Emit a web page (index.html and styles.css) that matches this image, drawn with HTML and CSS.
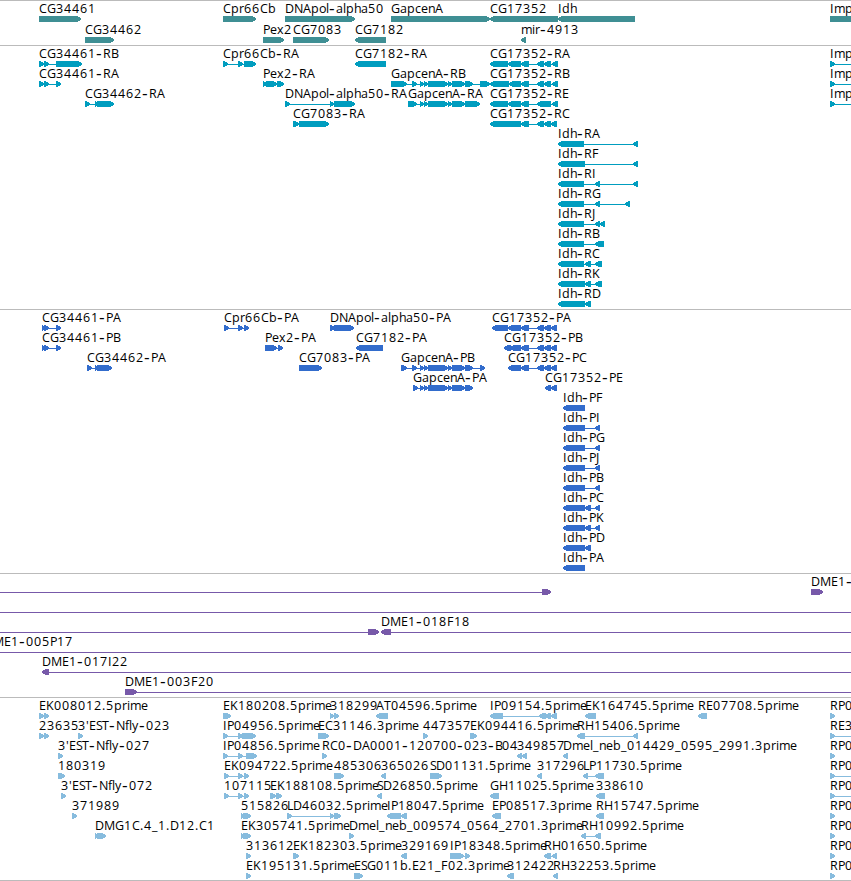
FILE: index.html
```
<!DOCTYPE html>
<html lang="en">
<head>
<meta charset="utf-8">
<title>Genome browser</title>
<link rel="stylesheet" href="styles.css">
</head>
<body>
<main class="browser">
  <section class="track genes" data-track="genes"></section>
  <section class="track transcripts" data-track="transcripts"></section>
  <section class="track proteins" data-track="proteins"></section>
  <section class="track clones" data-track="clones"></section>
  <section class="track ests" data-track="ests"></section>
</main>
<script src="tracks.js"></script>
</body>
</html>
```
FILE: styles.css
```
body {
  margin: 0;
  background: #fff;
  overflow: hidden;
}

.browser {
  display: flex;
  flex-direction: column;
  width: 851px;
  border-bottom: 1px solid #bbb;
}

.track {
  border-top: 1px solid #bbb;
}

.lane {
  display: block;
  width: 851px;
  overflow: visible;
}

.label {
  font-family: "Open Sans", "DejaVu Sans", sans-serif;
  font-size: 12.5px;
  fill: #000;
}

.hyphen {
  font-family: "Liberation Sans", sans-serif;
  font-size: 17px;
}

.glyph {
  shape-rendering: crispEdges;
}

.genes .glyph { fill: #3f8f94; }
.transcripts .glyph { fill: #009dbf; }
.proteins .glyph { fill: #326ccc; }
.clones .glyph { fill: #7759a9; }
.ests .glyph { fill: #87bcde; }
```
FILE: tracks.js
```
// Each feature is "row label strand segments"; "_" alone stands for no label,
// and a segment prefixed with "~" is a bare connector line.
const tracks = {
  genes: { height: 44, pitch: 21, features: `
0 CG34461 > 39-81
0 Cpr66Cb > 223-256
0 DNApol-alpha50 > 285-355
0 GapcenA > 391-490
0 CG17352 < 490-558
0 Idh < 558-635
0 Imp > 830-870
1 CG34462 > 85-114
1 Pex2 > 263-284
1 CG7083 > 293-329
1 CG7182 < 355-386
1 mir-4913 < 521-526` },
  transcripts: { height: 263, pitch: 20, features: `
0 CG34461-RB > 39-44,44-49,56-82
0 Cpr66Cb-RA > 223-228,238-243,244-256
0 CG7182-RA < 355-386
0 CG17352-RA < 490-508,508-521,521-529,537-544,544-551,552-558
0 Imp > 830-835,~835-851
1 CG34461-RA > 39-44,44-49,56-61
1 Pex2-RA > 263-267,266-277,277-284
1 GapcenA-RB > 391-407,412-417,420-424,424-428,428-448,448-452,452-465,465-473,480-490
1 CG17352-RB < 490-509,509-521,521-529,537-544,544-551,552-558
1 Imp > 830-835,~835-851
2 CG34462-RA > 85-90,95-99,97-114
2 DNApol-alpha50-RA > 285-290,330-334,334-355
2 GapcenA-RA > 408-417,420-424,424-428,428-448,448-452,452-465,465-480
2 CG17352-RE < 490-508,508-521,521-529,537-551,552-558
2 Imp > 830-835,~835-851
3 CG7083-RA > 293-299,299-329
3 CG17352-RC < 490-521,521-529,537-544,544-551,551-557
4 Idh-RA < 558-584,633-638
5 Idh-RF < 558-585,633-638
6 Idh-RI < 558-584,595-600,633-638
7 Idh-RG < 558-584,595-600,625-630
8 Idh-RJ < 558-584,595-600,600-605
9 Idh-RB < 558-584,595-604
10 Idh-RC < 558-584,585-591,595-602
11 Idh-RK < 558-585,585-591,595-602
12 Idh-RD < 558-585,585-591` },
  proteins: { height: 263, pitch: 20, features: `
0 CG34461-PA > 42-46,44-49,56-61
0 Cpr66Cb-PA > 224-229,238-243,244-249
0 DNApol-alpha50-PA > 330-335,334-354
0 CG17352-PA < 492-508,508-521,521-529,537-544,544-551,551-557
1 CG34461-PB > 42-46,44-49,56-61
1 Pex2-PA > 265-268,266-277,278-283
1 CG7182-PA < 356-383
1 CG17352-PB < 504-511,510-521,521-529,537-544,544-551,551-557
2 CG34462-PA > 87-92,95-99,97-112
2 CG7083-PA > 299-322
2 GapcenA-PB > 401-407,412-417,420-424,424-428,428-448,448-452,452-465,465-473,480-485
2 CG17352-PC < 508-521,521-529,537-544,544-551,551-557
3 GapcenA-PA > 413-418,420-424,424-428,428-448,448-452,452-465,465-473
3 CG17352-PE < 545-551,551-557
4 Idh-PF < 563-585
5 Idh-PI < 563-585,595-600
6 Idh-PG < 563-585,595-600
7 Idh-PJ < 563-585,595-600
8 Idh-PB < 563-585,595-600
9 Idh-PC < 563-585,585-591,595-600
10 Idh-PK < 563-585,585-591,595-600
11 Idh-PD < 563-585,585-591
12 Idh-PA < 563-585` },
  clones: { height: 123, pitch: 20, features: `
0 _ > ~0-542,542-551
0 DME1- > 811-823
1 _ > ~0-851
2 _ > ~0-368,368-379
2 DME1-018F18 < 381-391,~391-851
3 DME1-005P17 > ~-16-851
4 DME1-017I22 < 42-49,~49-851
5 DME1-003F20 > 125-137,~137-851` },
  ests: { height: 182, pitch: 20, features: `
0 EK008012.5prime > 39-44,44-49
0 EK180208.5prime > 223-231
0 318299 > 330-334,334-339
0 AT04596.5prime < 376-388
0 IP09154.5prime < 490-503,539-546,545-551,551-557
0 EK164745.5prime < 585-596
0 RE07708.5prime < 698-707
0 RP0 > 830-835
1 23635 > 39-44,44-49
1 3'EST-Nfly-023 > 78-83
1 IP04956.5prime > 223-228,238-243,242-256
1 EC31146.3prime > 318-329
1 447357 > 423-428
1 EK094416.5prime > 470-477
1 RH15406.5prime < 577-585,633-638
1 RE3 > 830-835,~835-851
2 3'EST-Nfly-027 > 58-63
2 IP04856.5prime > 223-228,238-243,246-257
2 RC0-DA0001-120700-023-B04 > 322-327
2 349857 < 517-522,522-527
2 Dmel_neb_014429_0595_2991.3prime < 563-568
2 RP0 > 830-835
3 180319 > 58-65
3 EK094722.5prime > 224-229,238-243,244-249
3 485306 > 334-344
3 365026 < 381-386
3 SD01131.5prime > 430-442
3 317296 < 537-542
3 LP11730.5prime < 583-588,595-604
3 RP0 > 830-835,~835-851
4 3'EST-Nfly-072 > 61-66
4 107115 > 224-229,238-243,244-249
4 EK188108.5prime > 270-276,276-282
4 SD26850.5prime < 377-382
4 GH11025.5prime < 490-499
4 338610 < 596-605
4 RP0 > 830-835,~835-851
5 371989 > 72-77
5 515826 > 241-245,243-251
5 LD46032.5prime > 287-292,330-334,334-341
5 IP18047.5prime < 387-401,401-407
5 EP08517.3prime < 492-501
5 RH15747.5prime < 596-604
5 RP0 > 830-835
6 DMG1C.4_1.D12.C1 > 95-99,97-106
6 EK305741.5prime > 241-245,243-251
6 Dmel_neb_009574_0564_2701.3prime > 349-354
6 RH10992.5prime < 581-586,595-601
6 RP0 > 830-835
7 313612 > 246-251
7 EK182303.5prime > 293-299
7 329169 < 401-407
7 IP18348.5prime > 450-464,465-470
7 RH01650.5prime < 544-551,552-557
7 RP0 > 830-835
8 EK195131.5prime > 246-251
8 ESG011b.E21_F02.3prime > 354-363
8 312422 < 507-514
8 RH32253.5prime < 553-558
8 RP0 > 830-835` }
};

const GLYPH_TOP = 15;
const BASELINE = 12;

// Whole-pixel character advances keep the labels on the pixel grid.
const advances = {
  A: 8, B: 7, C: 8, D: 9, E: 7, F: 7, G: 9, H: 9, I: 4, J: 4, K: 8, L: 6,
  M: 11, N: 9, P: 7, R: 8, S: 6, T: 7, a: 7, b: 8, c: 6, d: 8, e: 7, f: 4,
  g: 8, h: 7, i: 3, l: 3, m: 11, n: 7, o: 7, p: 8, r: 5, x: 7, y: 7,
  "-": 7, ".": 4, _: 6, "'": 3
};

const NS = "http://www.w3.org/2000/svg";

function make(name, attributes) {
  const node = document.createElementNS(NS, name);
  for (const key in attributes) node.setAttribute(key, attributes[key]);
  return node;
}

function arrow(start, end, top, strand) {
  const head = Math.min(5, end - start);
  const tip = `${top + 2}V${top + 4}`;
  const d = strand === ">"
    ? `M${start} ${top}H${end - head + 0.6}L${end} ${tip}L${end - head + 0.6} ${top + 6}H${start}Z`
    : `M${end} ${top}H${start + head - 0.6}L${start} ${tip}L${start + head - 0.6} ${top + 6}H${end}Z`;
  return make("path", { class: "glyph", d });
}

function label(text, start, baseline) {
  let x = start;
  const node = make("text", { class: "label" });
  // hyphens are long dashes, drawn larger than the rest of the label
  text.split(/(-)/).filter(Boolean).forEach(run => {
    const dash = run === "-";
    const positions = [...run].map(ch => {
      const at = x;
      x += advances[ch] || 8;
      return at;
    });
    const span = make("tspan", { x: positions.join(" "), y: baseline + (dash ? 1 : 0) });
    if (dash) span.setAttribute("class", "hyphen");
    span.textContent = run;
    node.append(span);
  });
  return node;
}

document.querySelectorAll("[data-track]").forEach(section => {
  const track = tracks[section.dataset.track];
  const svg = make("svg", { class: "lane", width: 851, height: track.height });
  track.features.trim().split("\n").forEach(line => {
    const [row, name, strand, list] = line.split(" ");
    const shift = row * track.pitch;
    const top = GLYPH_TOP + shift;
    const segments = list.split(",").map(item => {
      const [, bare, start, end] = item.match(/^(~?)(-?\d+)-(\d+)$/);
      return { bare, start: +start, end: +end };
    });
    const first = segments[0].start;
    const last = segments[segments.length - 1].end;
    if (segments.length > 1 || segments[0].bare) {
      svg.append(make("rect", { class: "glyph", x: first, y: top + 3, width: last - first, height: 1 }));
    }
    segments.filter(s => !s.bare).forEach(s => svg.append(arrow(s.start, s.end, top, strand)));
    if (name !== "_") svg.append(label(name, first, BASELINE + shift));
  });
  section.append(svg);
});
```
